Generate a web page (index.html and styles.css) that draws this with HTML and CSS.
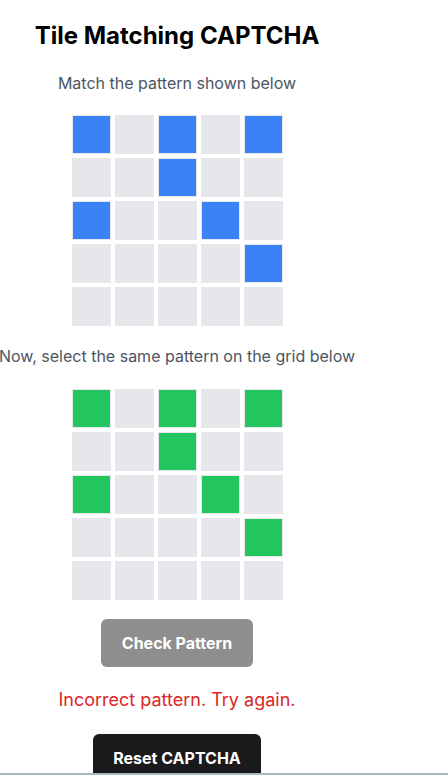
FILE: index.html
```html
<!DOCTYPE html>
<html lang="en">
<head>
<meta charset="utf-8">
<title>Tile Matching CAPTCHA</title>
<link rel="stylesheet" href="styles.css">
</head>
<body>
<div class="captcha">
  <h1 class="title">Tile Matching CAPTCHA</h1>
  <p class="hint">Match the pattern shown below</p>
  <div class="grid">
    <div class="tile on-blue"></div><div class="tile"></div><div class="tile on-blue"></div><div class="tile"></div><div class="tile on-blue"></div>
    <div class="tile"></div><div class="tile"></div><div class="tile on-blue"></div><div class="tile"></div><div class="tile"></div>
    <div class="tile on-blue"></div><div class="tile"></div><div class="tile"></div><div class="tile on-blue"></div><div class="tile"></div>
    <div class="tile"></div><div class="tile"></div><div class="tile"></div><div class="tile"></div><div class="tile on-blue"></div>
    <div class="tile"></div><div class="tile"></div><div class="tile"></div><div class="tile"></div><div class="tile"></div>
  </div>
  <p class="hint hint-wide">Now, select the same pattern on the grid below</p>
  <div class="grid grid-answer">
    <div class="tile on-green"></div><div class="tile"></div><div class="tile on-green"></div><div class="tile"></div><div class="tile on-green"></div>
    <div class="tile"></div><div class="tile"></div><div class="tile on-green"></div><div class="tile"></div><div class="tile"></div>
    <div class="tile on-green"></div><div class="tile"></div><div class="tile"></div><div class="tile on-green"></div><div class="tile"></div>
    <div class="tile"></div><div class="tile"></div><div class="tile"></div><div class="tile"></div><div class="tile on-green"></div>
    <div class="tile"></div><div class="tile"></div><div class="tile"></div><div class="tile"></div><div class="tile"></div>
  </div>
  <button class="btn btn-check" type="button">Check Pattern</button>
  <p class="error">Incorrect pattern. Try again.</p>
  <button class="btn btn-reset" type="button">Reset CAPTCHA</button>
</div>
<div class="bottom-edge"></div>
</body>
</html>
```
FILE: styles.css
```css
html, body {
  margin: 0;
  padding: 0;
  background: #ffffff;
}
body {
  font-family: Inter, "Liberation Sans", sans-serif;
  overflow: hidden;
  height: 775px;
}
.captcha {
  width: 354px;
  display: flex;
  flex-direction: column;
  align-items: center;
  text-align: center;
  padding-top: 20px;
}
.title {
  margin: 0;
  font-size: 24px;
  line-height: 32px;
  font-weight: 700;
  color: #000000;
  white-space: nowrap;
}
.hint {
  margin: 19px 0 0;
  font-size: 16px;
  line-height: 24px;
  color: #4b5563;
  white-space: nowrap;
}
.hint-wide {
  margin-top: 18px;
}
.grid {
  display: grid;
  grid-template-columns: repeat(5, 39px);
  grid-auto-rows: 39px;
  gap: 4px;
  margin-top: 20px;
}
.grid-answer {
  margin-top: 21px;
}
.tile {
  box-sizing: border-box;
  background: #e5e7eb;
  border: 1px solid #e5e7eb;
}
.on-blue { background: #3b82f6; }
.on-green { background: #22c55e; }
.btn {
  border: none;
  color: #ffffff;
  font-family: inherit;
  font-weight: 700;
  font-size: 16px;
  border-radius: 6px;
}
.btn-check {
  margin-top: 19px;
  width: 152px;
  height: 48px;
  background: #8e8e8e;
}
.error {
  margin: 21px 0 0;
  font-size: 18px;
  line-height: 24px;
  color: #dc2626;
}
.btn-reset {
  margin-top: 22px;
  width: 168px;
  height: 48px;
  background: #1a1a1c;
}
.bottom-edge {
  position: fixed;
  left: 0;
  right: 0;
  bottom: 0;
  height: 2px;
  background: #aab8be;
}
```
